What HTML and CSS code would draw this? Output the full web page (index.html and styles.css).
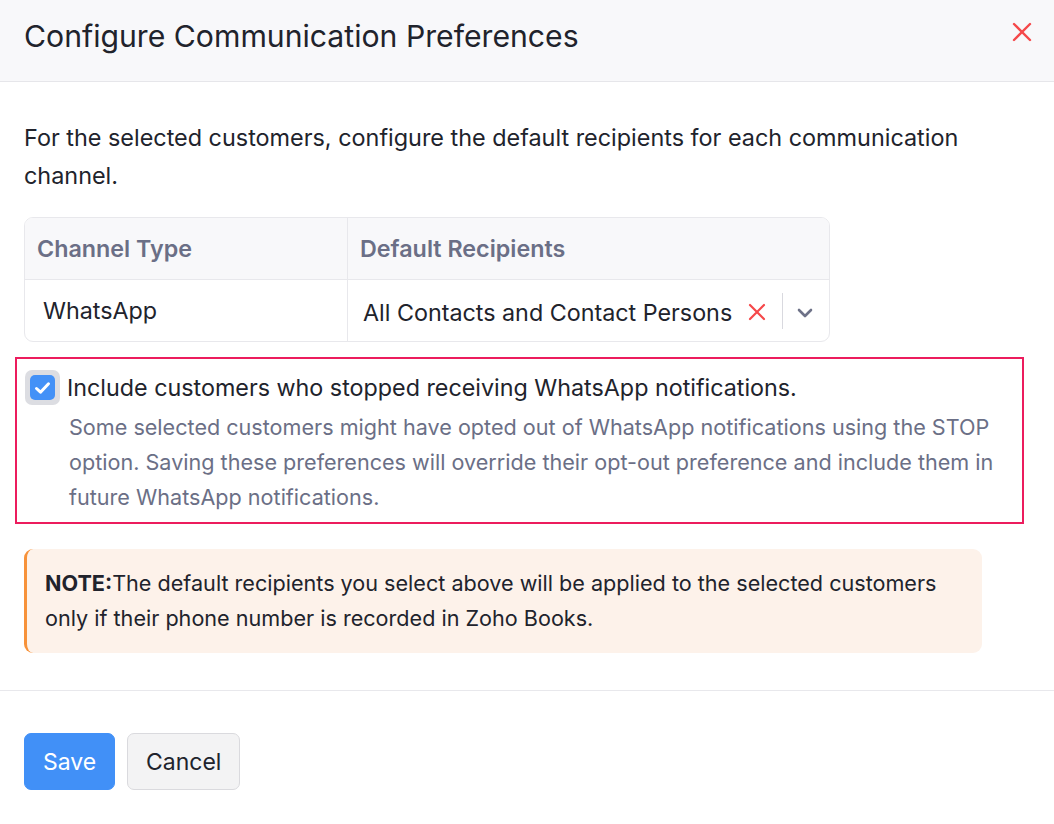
FILE: index.html
```html
<!DOCTYPE html>
<html>
<head>
<meta charset="utf-8">
<link rel="stylesheet" href="styles.css">
</head>
<body>
<div class="modal">
  <header class="modal-header">
    <h1 class="modal-title">Configure Communication Preferences</h1>
    <button class="close-btn" aria-label="Close">
      <svg width="20" height="20" viewBox="0 0 20 20"><path d="M2 2L18 18M18 2L2 18" stroke="#f5484a" stroke-width="2.4" stroke-linecap="round"/></svg>
    </button>
  </header>
  <main class="modal-body">
    <p class="intro">For the selected customers, configure the default recipients for each communication channel.</p>
    <div class="table">
      <div class="row head">
        <div class="cell c1">Channel Type</div>
        <div class="cell c2">Default Recipients</div>
      </div>
      <div class="row">
        <div class="cell c1">WhatsApp</div>
        <div class="cell c2 select">
          <span class="select-value">All Contacts and Contact Persons</span>
          <svg class="clear" width="18" height="18" viewBox="0 0 18 18"><path d="M2 2L16 16M16 2L2 16" stroke="#f5484a" stroke-width="2.2" stroke-linecap="round"/></svg>
          <span class="sep"></span>
          <svg class="chev" width="16" height="10" viewBox="0 0 16 10"><path d="M2 2L8 8L14 2" fill="none" stroke="#6e7288" stroke-width="2.6" stroke-linecap="round" stroke-linejoin="round"/></svg>
        </div>
      </div>
    </div>
    <div class="optin">
      <div class="check-line">
        <span class="checkbox">
          <span class="box">
            <svg width="17" height="14" viewBox="0 0 17 14"><path d="M2.5 7.5L6.5 11.2L14.5 2.8" fill="none" stroke="#fff" stroke-width="3" stroke-linecap="round" stroke-linejoin="round"/></svg>
          </span>
        </span>
        <span class="check-label">Include customers who stopped receiving WhatsApp notifications.</span>
      </div>
      <p class="optin-desc">Some selected customers might have opted out of WhatsApp notifications using the STOP option. Saving these preferences will override their opt-out preference and include them in future WhatsApp notifications.</p>
    </div>
    <div class="note"><strong>NOTE:</strong>The default recipients you select above will be applied to the selected customers only if their phone number is recorded in Zoho Books.</div>
  </main>
  <footer class="modal-footer">
    <button class="btn primary">Save</button>
    <button class="btn secondary">Cancel</button>
  </footer>
</div>
</body>
</html>
```
FILE: styles.css
```css
* { box-sizing: border-box; }
html, body { margin: 0; padding: 0; background: #fff; }
body {
  font-family: Inter, "Noto Sans", sans-serif;
  color: #21232c;
  width: 1054px;
  height: 824px;
  overflow: hidden;
}
.modal { display: flex; flex-direction: column; }
.modal-header {
  height: 82px;
  background: #f8f8fa;
  border-bottom: 1px solid #e6e6ea;
  display: flex;
  align-items: flex-start;
  justify-content: space-between;
  padding: 0 22px 0 24px;
}
.modal-title {
  margin: 18px 0 0;
  font-size: 30.2px;
  font-weight: 400;
  line-height: 36px;
  color: #21232c;
}
.close-btn {
  margin-top: 22px;
  border: 0;
  background: none;
  padding: 0;
  width: 20px;
  height: 20px;
  cursor: pointer;
}
.close-btn svg { display: block; }
.modal-body { padding: 37px 24px 37px; }
.intro {
  margin: 0 0 22px;
  font-size: 23.4px;
  line-height: 38px;
}
.table {
  width: 806px;
  border: 1px solid #e8e8ec;
  border-radius: 9px;
  overflow: hidden;
}
.row { display: flex; height: 61px; }
.row.head { background: #f8f8fa; border-bottom: 1px solid #e8e8ec; height: 62px; }
.cell { display: flex; align-items: center; font-size: 23.3px; }
.c1 { width: 323px; border-right: 1px solid #e8e8ec; padding-left: 18px; }
.c2 { flex: 1; padding-left: 15px; }
.head .cell { font-weight: 600; color: #6b6f86; padding-left: 12px; }
.head .c2 { padding-left: 12px; }
.select { padding-right: 16px; }
.select-value { flex: 1; margin-top: 3px; }
.clear { margin: 2px 16px 0 0; }
.sep { width: 1px; height: 36px; background: #d9d9df; margin-right: 14px; }
.chev { margin-top: 4px; }
.optin {
  margin: 15px 6px 0 -9px;
  border: 2px solid #ec1c5d;
  padding: 11px 10px 14px 8px;
  height: 167px;
}
.check-line { display: flex; align-items: center; gap: 7px; }
.checkbox {
  width: 35px; height: 35px;
  background: #dcdde2;
  border-radius: 7px;
  display: flex; align-items: center; justify-content: center;
  flex: none;
}
.box {
  width: 25px; height: 25px;
  background: #4391f7;
  border-radius: 5px;
  display: flex; align-items: center; justify-content: center;
}
.check-label { font-size: 23.3px; line-height: 30px; color: #21232c; }
.optin-desc {
  margin: 5px 0 0 44px;
  font-size: 21.6px;
  line-height: 35px;
  color: #6b6f86;
}
.note {
  margin-top: 25px;
  width: 958px;
  background: #fdf2ea;
  border-left: 3px solid #f7923a;
  border-radius: 9px;
  padding: 17px 20px 17px 18px;
  font-size: 21.6px;
  line-height: 35px;
  color: #21232c;
}
.note strong { font-weight: 700; }
.modal-footer {
  border-top: 1px solid #e8e8ec;
  padding: 42px 24px;
  display: flex;
  gap: 12px;
}
.btn {
  font-family: inherit;
  font-size: 23px;
  height: 57px;
  border-radius: 7px;
  padding: 0 18px;
  cursor: pointer;
}
.primary { background: #4190f7; color: #fff; border: 1px solid #4190f7; width: 91px; }
.secondary { background: #f3f3f4; color: #21232c; border: 1px solid #dadade; width: 113px; }
```
